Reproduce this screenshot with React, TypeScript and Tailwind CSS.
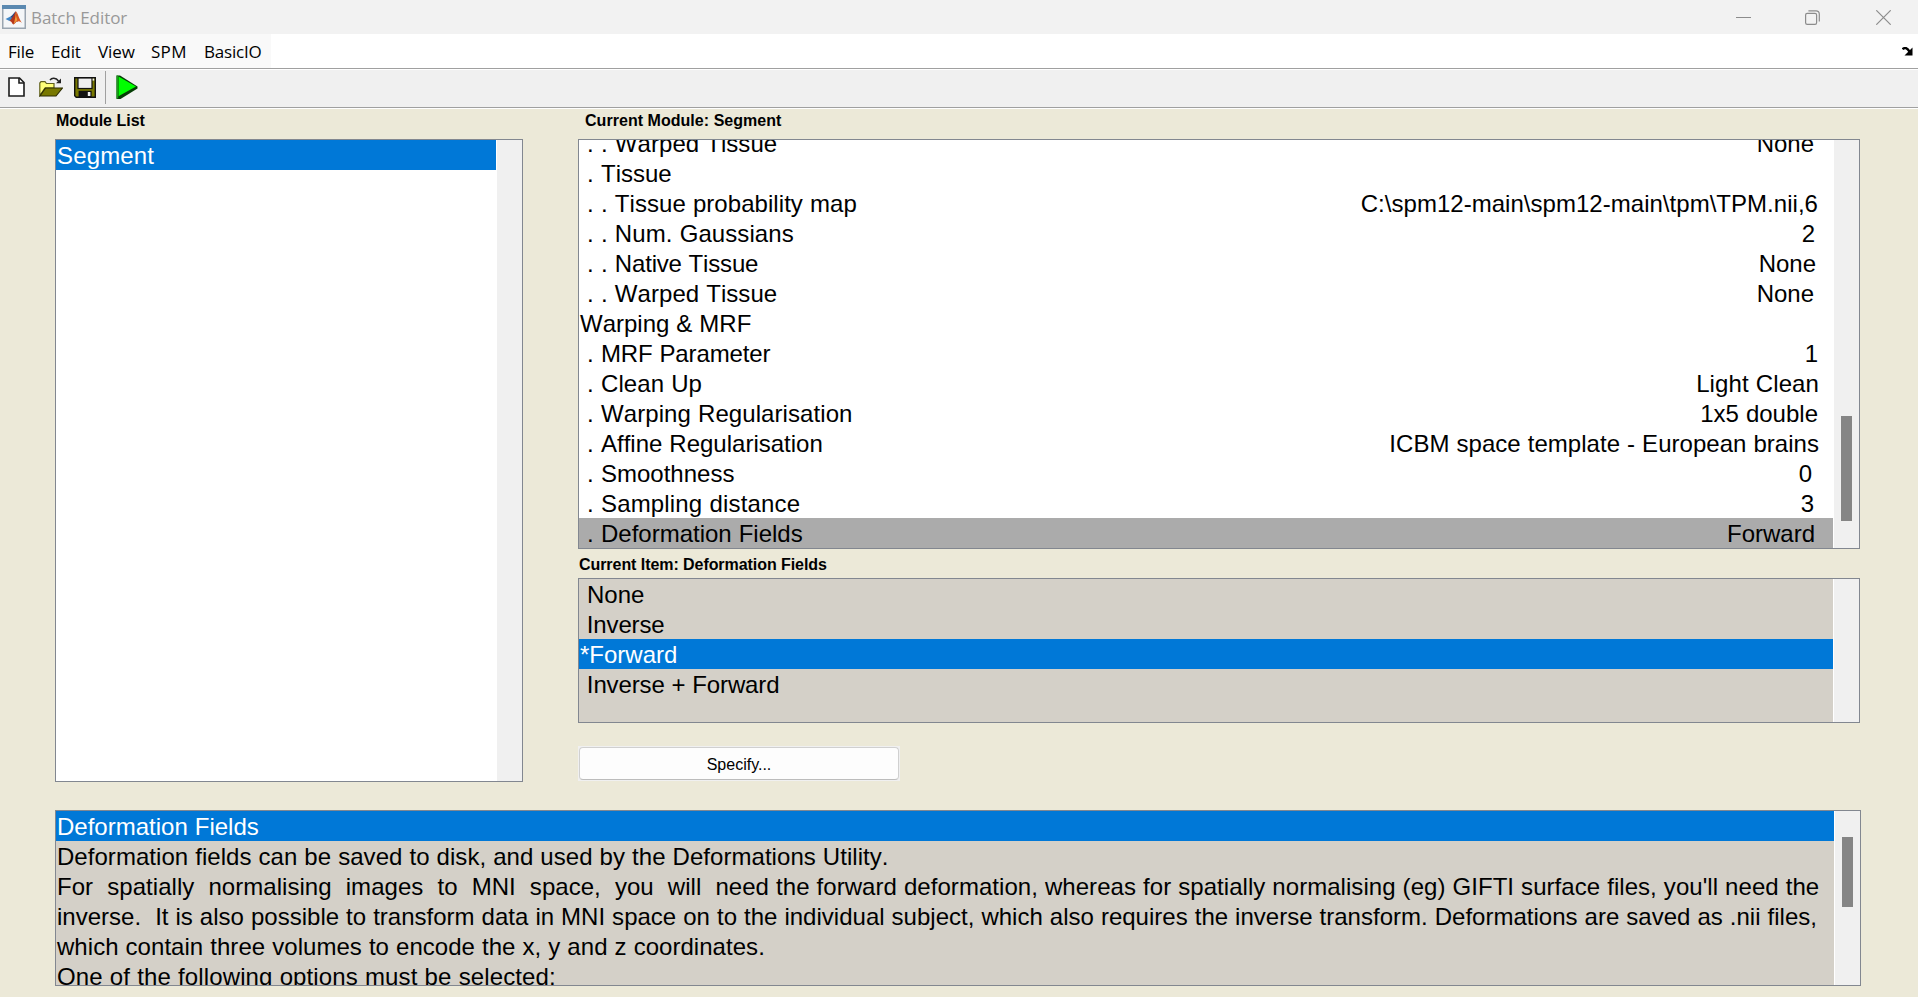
import React from "react";

type Item = { depth: number; label: string; value?: string; pad?: string; track?: string; vtrack?: string; selected?: boolean };

const items: Item[] = [
  { depth: 2, label: "Warped Tissue", track: "tracking-[0.05px]", value: "None", pad: "pr-[19px]" },
  { depth: 1, label: "Tissue" },
  { depth: 2, label: "Tissue probability map", track: "tracking-[0.055px]", value: "C:\\spm12-main\\spm12-main\\tpm\\TPM.nii,6", pad: "pr-[15px]", vtrack: "tracking-[0.03px]" },
  { depth: 2, label: "Num. Gaussians", track: "tracking-[0.09px]", value: "2", pad: "pr-[18px]" },
  { depth: 2, label: "Native Tissue", track: "tracking-[-0.18px]", value: "None", pad: "pr-[17px]" },
  { depth: 2, label: "Warped Tissue", track: "tracking-[0.05px]", value: "None", pad: "pr-[19px]" },
  { depth: 0, label: "Warping & MRF" },
  { depth: 1, label: "MRF Parameter", track: "tracking-[-0.12px]", value: "1", pad: "pr-[15px]" },
  { depth: 1, label: "Clean Up", track: "tracking-[0.08px]", value: "Light Clean", pad: "pr-[14px]", vtrack: "tracking-[0.1px]" },
  { depth: 1, label: "Warping Regularisation", track: "tracking-[0.08px]", value: "1x5 double", pad: "pr-[15px]" },
  { depth: 1, label: "Affine Regularisation", value: "ICBM space template - European brains", pad: "pr-[14px]", vtrack: "tracking-[0.03px]" },
  { depth: 1, label: "Smoothness", value: "0", pad: "pr-[21px]" },
  { depth: 1, label: "Sampling distance", track: "tracking-[0.17px]", value: "3", pad: "pr-[19px]" },
  { depth: 1, label: "Deformation Fields", value: "Forward", pad: "pr-[18px]", selected: true },
];

const prefix = ["", " . ", " . . "];

const helpLines = [
  { text: "Deformation Fields", track: "", selected: true },
  { text: "Deformation fields can be saved to disk, and used by the Deformations Utility.", track: "tracking-[0.04px]" },
  { text: "For  spatially  normalising  images  to  MNI  space,  you  will  need the forward deformation, whereas for spatially normalising (eg) GIFTI surface files, you'll need the", track: "tracking-[0.045px]" },
  { text: "inverse.  It is also possible to transform data in MNI space on to the individual subject, which also requires the inverse transform. Deformations are saved as .nii files,", track: "tracking-[0.011px]" },
  { text: "which contain three volumes to encode the x, y and z coordinates.", track: "tracking-[0.038px]" },
  { text: "One of the following options must be selected:", track: "tracking-[0.12px]" },
];

function MatlabIcon() {
  return (
    <svg width="24" height="24" viewBox="0 0 24 24" className="block">
      <rect x="0.75" y="0.75" width="22.5" height="22.5" fill="#f4f6f8" stroke="#9aa5b0" strokeWidth="1.5" />
      <rect x="0" y="0" width="24" height="4" fill="#5b89b0" />
      <path d="M3.5 14 L8.5 11.5 L10.5 13.5 L7.5 16 Z" fill="#3f86c6" />
      <path d="M8.5 11.5 C10.5 10.5 12 7.5 13.8 6.2 L11.5 14 L7.5 16 L10 13.5 Z" fill="#2b4a86" />
      <path d="M13.8 6.2 C12 9.5 10.5 13 7.5 16 C9.5 15.8 10.5 19.5 11.5 19.5 C13.5 18.5 14 16 16 16 L14.8 9 Z" fill="#b5351a" />
      <path d="M13.8 6.2 C15.8 7.5 17 14 20 18 C18 16.5 17 15.5 15 17 C15.5 13 14.8 9 13.8 6.2 Z" fill="#d8531f" />
      <path d="M13.6 7 C13.8 10.5 13 15 11.6 19 C13.3 18 14 16 15.3 15.6 Z" fill="#f29a35" />
    </svg>
  );
}

function NewIcon() {
  return (
    <svg width="17" height="20" viewBox="0 0 17 20" className="block">
      <path d="M1 1 H11.5 L16 5.5 V19 H1 Z" fill="#fff" stroke="#1c1c1c" strokeWidth="1.6" />
      <path d="M11 1 V6 H16" fill="none" stroke="#1c1c1c" strokeWidth="1.6" />
    </svg>
  );
}

function OpenIcon() {
  return (
    <svg width="24" height="20" viewBox="0 0 24 20" className="block">
      <path d="M0.8 18.5 V6 L2 4.6 H6 L7.5 6.5 H15 V11 H6 Z" fill="#ffff7a" stroke="#5f5f1c" strokeWidth="1.2" />
      <path d="M1 19 L6.5 11 H23.5 L17 19 Z" fill="#787800" stroke="#2c2c00" strokeWidth="1.1" />
      <path d="M11 3.2 C12.5 0.6 17 0.4 19.5 4" fill="none" stroke="#222" strokeWidth="1.4" />
      <path d="M22 1.5 V6.3 H17 Z" fill="#222" />
    </svg>
  );
}

function SaveIcon() {
  return (
    <svg width="22" height="21" viewBox="0 0 22 21" className="block">
      <path d="M0.7 0.7 H21.3 V20.3 H2.2 L0.7 18.8 Z" fill="#787800" stroke="#111" strokeWidth="1.4" />
      <rect x="4" y="1" width="14" height="10.5" fill="#efefef" stroke="#111" strokeWidth="1.2" />
      <rect x="18.6" y="1.6" width="1.6" height="2" fill="#efefef" />
      <rect x="4.6" y="13.8" width="13" height="6.6" fill="#111" />
      <rect x="13.8" y="15" width="2.6" height="4" fill="#efefef" />
    </svg>
  );
}

function RunIcon() {
  return (
    <svg width="22" height="25" viewBox="0 0 22 25" className="block">
      <path d="M0.5 0.5 H4 L21.5 11.5 V13.5 L4.5 24 H0.5 Z" fill="#053d05" />
      <path d="M2.5 1.5 L20 11.5 L3.8 20.5 L2.5 21.5 Z" fill="#00ff00" />
      <path d="M0.5 0.5 H2.2 V23.5 H0.5 Z" fill="#1d9a1d" />
    </svg>
  );
}

function ScrollBar({ className, children }: { className: string; children?: React.ReactNode }) {
  return <div className={`shrink-0 bg-[#f0f0f0] ${className}`}>{children}</div>;
}

const box = "flex border border-[#828790] overflow-hidden";
const row = "h-[30px] pl-px text-[24px] leading-[32px] whitespace-pre [font-kerning:none] [word-spacing:0.33px]";
const heading = "text-[16px] leading-[18px] font-bold whitespace-pre";

export default function App() {
  return (
    <div className="flex h-[997px] w-[1918px] flex-col overflow-hidden bg-[#ece9d8] font-['Liberation_Sans',Arial,sans-serif] text-black">
      <header className="flex h-[34px] shrink-0 items-center bg-[#f2f2f2] pl-[2px]">
        <MatlabIcon />
        <span className="ml-[5px] pt-px font-['Open_Sans','Noto_Sans',sans-serif] text-[17px] leading-6 tracking-[-0.05px] text-[#999999]">Batch Editor</span>
        <div className="ml-auto flex items-center pr-[27px]">
          <svg width="15" height="15" className="mr-[54px] block"><path d="M0 7.5 H15" stroke="#8c8c8c" /></svg>
          <svg width="15" height="15" viewBox="0 0 15 15" className="mr-[56px] block" fill="none" stroke="#8c8c8c" strokeWidth="1.2">
            <rect x="0.6" y="3.4" width="11" height="11" rx="1.6" />
            <path d="M3.4 0.9 H11 Q14.3 0.9 14.3 4.2 V11.6" />
          </svg>
          <svg width="15" height="15" viewBox="0 0 15 15" className="block" stroke="#8c8c8c" strokeWidth="1.2"><path d="M0.3 0.3 L14.7 14.7 M14.7 0.3 L0.3 14.7" /></svg>
        </div>
      </header>

      <nav className="flex h-[34px] shrink-0 items-center bg-white">
        <div className="flex h-full w-[271px] items-center bg-[#f9f9f9] pt-px pl-[8px] font-['Open_Sans','Noto_Sans',sans-serif] text-[17px] leading-6">
          <span className="w-[43px] tracking-[-0.2px]">File</span>
          <span className="w-[47px] tracking-[-0.1px]">Edit</span>
          <span className="w-[53px] tracking-[-0.1px]">View</span>
          <span className="w-[53px] tracking-[0.3px]">SPM</span>
          <span className="tracking-[-0.2px]">BasicIO</span>
        </div>
        <svg width="11" height="9" viewBox="0 0 11 9" className="mr-[5px] ml-auto block">
          <path d="M0.5 2.2 C3 0 5 1 7.5 4.5" fill="none" stroke="#000" strokeWidth="2.4" />
          <path d="M10.5 0.5 V8.5 H2.5 Z" fill="#000" />
        </svg>
      </nav>

      <div className="flex h-[41px] shrink-0 items-center border-t border-b border-t-[#a0a0a0] border-b-white bg-[#f0f0f0]">
        <div className="flex h-full w-full items-center border-t border-b border-t-white border-b-[#a0a0a0] pb-[3px] pl-[8px]">
          <NewIcon />
          <div className="ml-[14px]"><OpenIcon /></div>
          <div className="ml-[11px]"><SaveIcon /></div>
          <div className="ml-[9px] h-[33px] w-px bg-[#a0a0a0]" />
          <div className="ml-[10px]"><RunIcon /></div>
        </div>
      </div>

      <main className="flex flex-col pl-[55px]">
        <div className="flex h-[701px]">
          <section className="flex w-[468px] flex-col pt-[3px]">
            <h2 className={`${heading} mb-[9px] pl-px`}>Module List</h2>
            <div className={`${box} h-[643px] bg-white`}>
              <div className="mr-px flex-1">
                <div className={`${row} bg-[#0078d7] tracking-[0.15px] text-white`}>Segment</div>
              </div>
              <ScrollBar className="w-[25px]" />
            </div>
          </section>

          <section className="ml-[55px] flex w-[1282px] flex-col pt-[3px]">
            <h2 className={`${heading} mb-[9px] pl-[7px] tracking-[0.04px]`}>Current Module: Segment</h2>
            <div className={`${box} h-[410px] bg-white`}>
              <div className="-mt-[12px] mr-px flex-1">
                {items.map((it, i) => (
                  <div key={i} className={`flex justify-between ${row} ${it.selected ? "bg-[#ababab]" : ""}`}>
                    <span><span className="tracking-[0.1px]">{prefix[it.depth]}</span><span className={it.track ?? ""}>{it.label}</span></span>
                    <span className={`${it.pad ?? ""} ${it.vtrack ?? ""}`}>{it.value}</span>
                  </div>
                ))}
              </div>
              <ScrollBar className="w-[25px] pt-[276px] pl-[7px]">
                <div className="h-[105px] w-[11px] bg-[#858585]" />
              </ScrollBar>
            </div>

            <h2 className={`${heading} mt-[7px] mb-[4px] pl-px tracking-[-0.06px]`}>Current Item: Deformation Fields</h2>
            <div className={`${box} h-[145px] bg-white`}>
              <div className="mr-px flex-1 bg-[#d4d0c8]">
                <div className={row}> None</div>
                <div className={`${row} tracking-[-0.15px]`}> Inverse</div>
                <div className={`${row} bg-[#0078d7] text-white`}>*Forward</div>
                <div className={`${row} tracking-[-0.13px]`}> Inverse + Forward</div>
              </div>
              <ScrollBar className="w-[25px]" />
            </div>

            <div className="mt-[23px] h-[35px] w-[322px] bg-[#f0f0f0] p-px">
              <button className="flex h-full w-full items-center justify-center rounded-[4px] border border-[#d0d0d0] border-b-[#bcbcbc] bg-[#fdfdfd] pt-[2px] text-[16px] leading-[18px]">Specify...</button>
            </div>
          </section>
        </div>

        <div className={`${box} h-[176px] w-[1806px] bg-white`}>
          <div className="mr-px flex-1 bg-[#d4d0c8]">
            {helpLines.map((l, i) => (
              <div key={i} className={`${row} ${l.track} ${l.selected ? "bg-[#0078d7] text-white" : ""}`}>{l.text}</div>
            ))}
          </div>
          <ScrollBar className="w-[25px] pt-[26px] pl-[7px]">
            <div className="h-[70px] w-[11px] bg-[#858585]" />
          </ScrollBar>
        </div>
      </main>
    </div>
  );
}
